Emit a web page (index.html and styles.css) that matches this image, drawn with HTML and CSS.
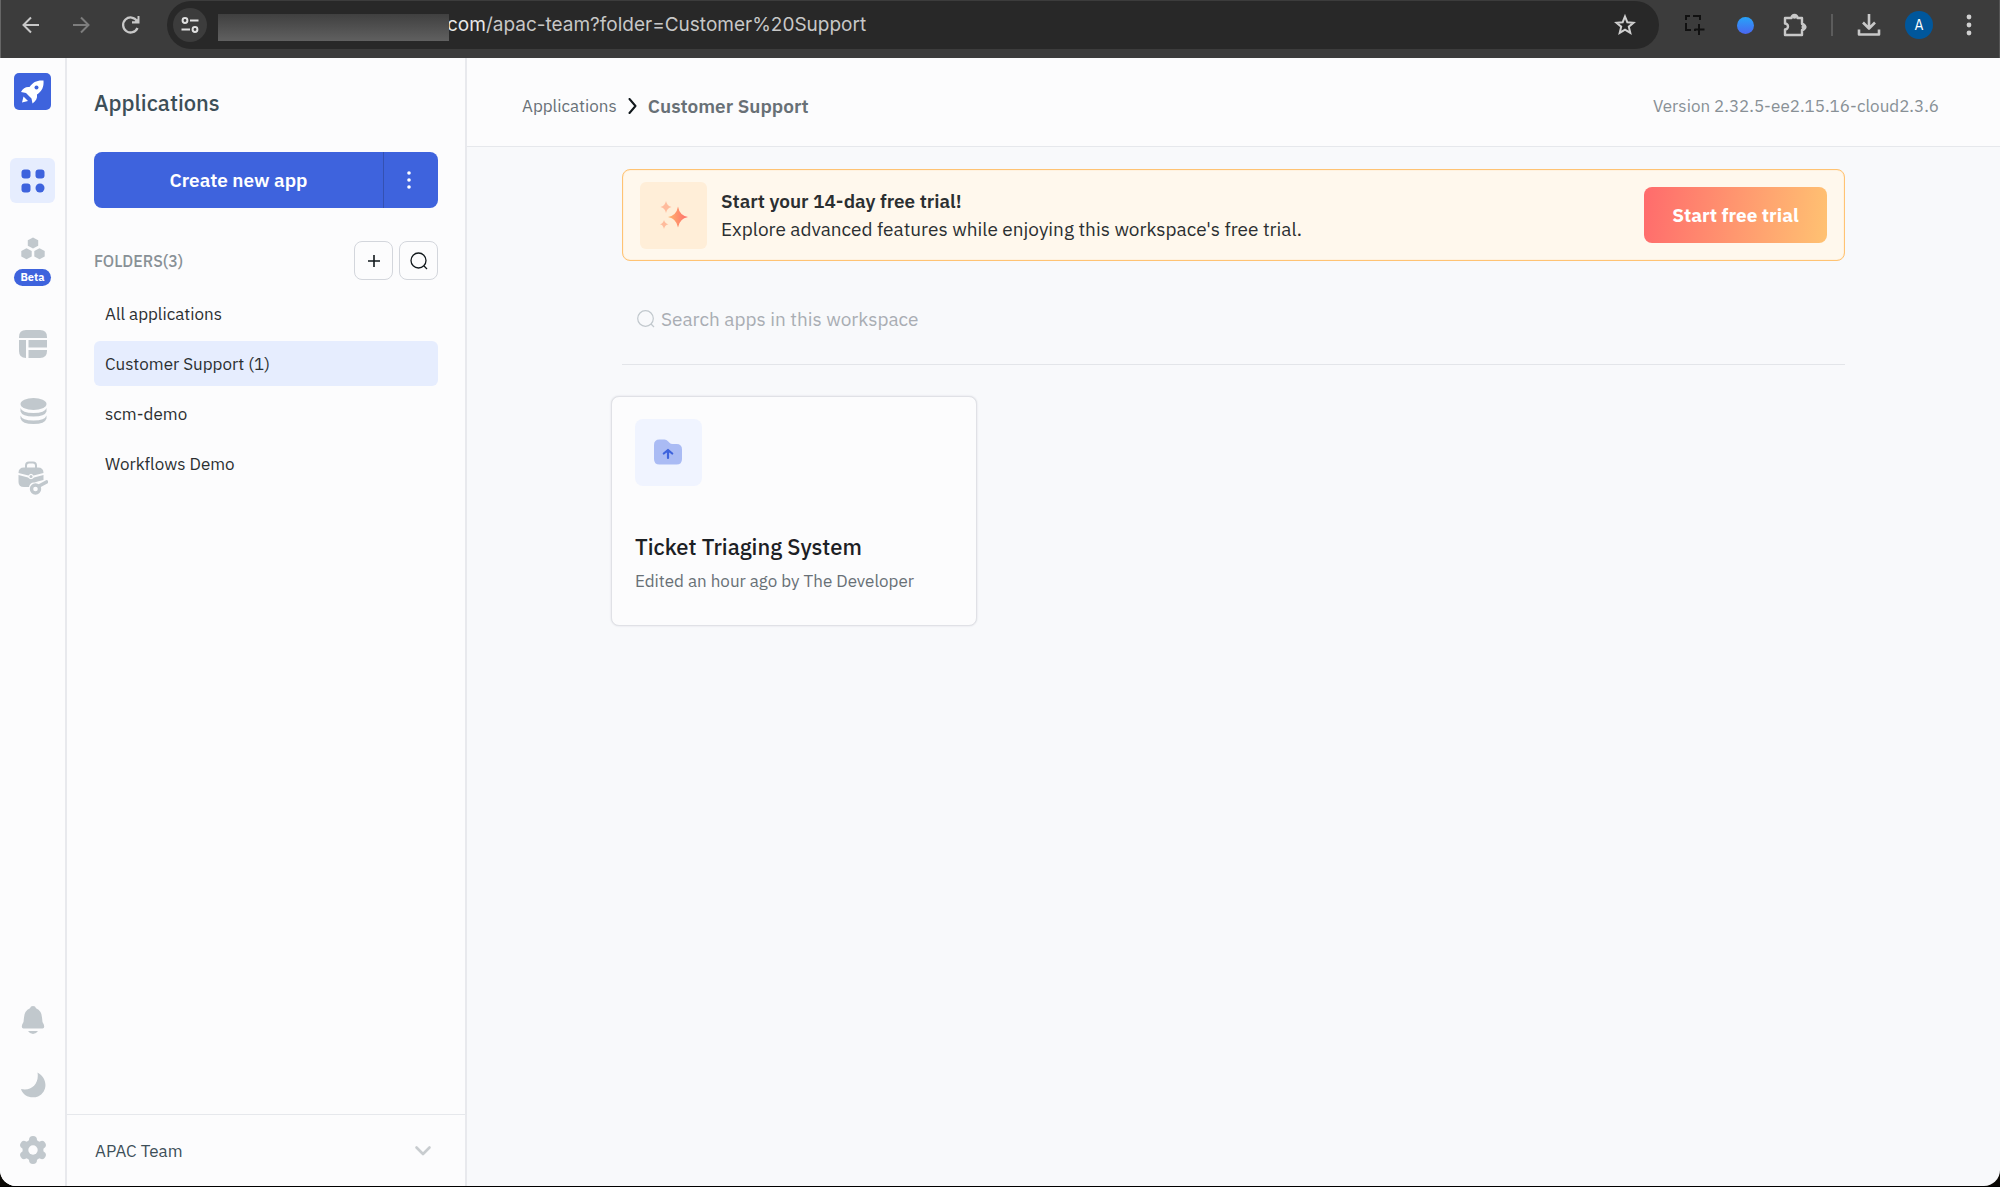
FILE: index.html
```html
<!DOCTYPE html>
<html lang="en">
<head>
<meta charset="utf-8">
<meta name="viewport" content="width=device-width, initial-scale=1">
<title>Applications</title>
<link rel="stylesheet" href="styles.css">
</head>
<body>
<div class="window">
  <div class="browser-bar">
    <button class="tool" aria-label="Back"><svg width="18" height="18" viewBox="0 0 18 18" fill="none" stroke="#c8c8c8" stroke-width="2"><path d="M17 9H2M9 1.5L1.5 9L9 16.5"/></svg></button>
    <button class="tool" aria-label="Forward"><svg width="18" height="18" viewBox="0 0 18 18" fill="none" stroke="#7d7d7d" stroke-width="2"><path d="M1 9H16M9 1.5L16.5 9L9 16.5"/></svg></button>
    <button class="tool" aria-label="Reload"><svg width="20" height="20" viewBox="0 0 20 20"><path d="M16.5 13A7.5 7.5 0 1 1 16 6" fill="none" stroke="#c8c8c8" stroke-width="2.3"/><path d="M18.5 1V8.5H11V6.3L14 6.3L16.5 4V1Z" fill="#c8c8c8"/></svg></button>
    <div class="address">
      <button class="site-info" aria-label="Site information"><svg width="18" height="18" viewBox="0 0 18 18" fill="none" stroke="#e0e0e0" stroke-width="2"><circle cx="4" cy="4.5" r="2.4"/><path d="M9 4.500H17.500M0.500 13.500H9"/><circle cx="14" cy="13.500" r="2.400"/></svg></button>
      <span class="masked"></span>
      <span class="url"><span class="host">com</span>/apac-team?folder=Customer%20Support</span>
      <button class="star" aria-label="Bookmark"><svg width="24" height="24" viewBox="0 0 24 24" fill="none" stroke="#cfcfcf" stroke-width="2"><path d="M12 3.500L14.300 9.200L20.500 9.700L15.800 13.700L17.300 19.900L12 16.600L6.700 19.900L8.200 13.700L3.500 9.700L9.700 9.200Z"/></svg></button>
    </div>
    <div class="extensions">
      <button class="tool" aria-label="Capture"><svg width="20" height="20" viewBox="0 0 20 20" fill="none" stroke="#111" stroke-width="2"><path d="M1 5V1H5M8 1H12M12 1H15V5M1 8V12M1 12V15H6M9 15H11M14 9V20M9.500 14.500H19.500"/></svg></button>
      <button class="tool" aria-label="Assistant"><span class="orb"></span></button>
      <button class="tool" aria-label="Extensions"><svg width="26" height="26" viewBox="0 0 26 26"><path d="M3 6H9.500A3 3 0 0 1 15.500 6H20V12A3 3 0 0 1 20 18V23H3V17.500A3 3 0 0 0 3 11.500Z" fill="none" stroke="#c8c8c8" stroke-width="2.400" stroke-linejoin="round"/><circle cx="12.500" cy="4.500" r="2.300" fill="#c8c8c8"/><circle cx="22" cy="15" r="2.500" fill="#c8c8c8"/></svg></button>
      <span class="bar-divider"></span>
      <button class="tool" aria-label="Downloads"><svg width="24" height="24" viewBox="0 0 24 24" fill="none" stroke="#c8c8c8" stroke-width="2.600"><path d="M12 1V15M6 9.500L12 15.500L18 9.500M2 16.500V21.500H22V16.500" stroke-linejoin="round"/></svg></button>
      <button class="profile" aria-label="Profile">A</button>
      <button class="tool" aria-label="Browser menu"><svg width="6" height="22" viewBox="0 0 6 22" fill="#d0d0d0"><circle cx="3" cy="3" r="2.400"/><circle cx="3" cy="11" r="2.400"/><circle cx="3" cy="19" r="2.400"/></svg></button>
    </div>
  </div>

  <div class="app">
    <nav class="rail" aria-label="Main">
      <a class="logo" href="#" aria-label="Home"><svg width="25" height="25" viewBox="0 0 25 25"><path d="M23.500 1.500C17 1 13 3 9.500 8C6 7.500 3 9 1 13L6 14L11.500 19.500L12.500 24.500C16 22 17.500 19.500 17 15.500C22 12 24 8 23.500 1.500Z" fill="#fff"/><path d="M3.500 17.500L8 22L2 23.500Z" fill="#fff"/><circle cx="16.500" cy="8.500" r="2" fill="#3e63dd"/></svg></a>
      <a class="rail-item active" href="#" aria-label="Applications"><svg width="24" height="24" viewBox="0 0 24 24" fill="#3e63dd"><rect x="0.500" y="0.500" width="9" height="9" rx="3"/><rect x="14.500" y="0.500" width="9" height="9" rx="3"/><rect x="0.500" y="14.500" width="9" height="9" rx="3"/><circle cx="19" cy="19" r="4.500"/></svg></a>
      <a class="rail-item workflows" href="#"><svg width="24" height="23" viewBox="0 0 24 23" fill="#c1c8cd"><path d="M12 0.500L17.200 3.300V8.700L12 11.500L6.800 8.700V3.300Z"/><path d="M5.500 11.300L10.700 14.100V19.500L5.500 22.300L0.300 19.500V14.100Z"/><path d="M18.500 11.300L23.700 14.100V19.500L18.500 22.300L13.300 19.500V14.100Z"/></svg><span class="beta">Beta</span></a>
      <a class="rail-item" href="#" aria-label="Database"><svg width="28" height="28" viewBox="0 0 28 28" fill="#c1c8cd"><path d="M0 8V7Q0 0 7 0H21Q28 0 28 7V8ZM0 10H7V28Q0 28 0 21ZM9.500 10H28V17.500H9.500ZM9.500 20H28V21Q28 28 21 28H9.500Z"/></svg></a>
      <a class="rail-item" href="#" aria-label="Data sources"><svg width="28" height="28" viewBox="0 0 28 28"><ellipse cx="14.500" cy="7" rx="13" ry="6" fill="#c1c8cd"/><path d="M1.500 11Q3 16 14.500 16T27.500 11V14.500Q26 19.500 14.500 19.500T1.500 14.500ZM1.500 18.500Q3 23.500 14.500 23.500T27.500 18.500V21.500Q26 27 14.500 27T1.500 21.500Z" fill="#c1c8cd"/></svg></a>
      <a class="rail-item" href="#" aria-label="Workspace constants"><svg width="30" height="34" viewBox="0 0 30 34"><path d="M8 7V4.500Q8 1.500 11 1.500H15Q18 1.500 18 4.500V7" fill="none" stroke="#c1c8cd" stroke-width="2"/><path d="M0.500 12Q0.500 6.500 6 6.500H20Q25.500 6.500 25.500 12L15.500 14.500Q13 11 10.500 14.500ZM0.500 14L10 16.500Q13 20 16 16.500L25.500 14V19Q20 20 16.500 21.500Q12 21 11 26H6Q0.500 26 0.500 21Z" fill="#c1c8cd"/><circle cx="13" cy="15.500" r="1.500" fill="#c1c8cd"/><circle cx="17.500" cy="28" r="4" fill="none" stroke="#c1c8cd" stroke-width="3.400"/><path d="M21 25L28.500 21" stroke="#c1c8cd" stroke-width="3.600" stroke-linecap="round"/></svg></a>
      <div class="rail-bottom">
        <a class="rail-item" href="#" aria-label="Notifications"><svg width="24" height="28" viewBox="0 0 24 28" fill="#c1c8cd"><path d="M12 0Q14.500 0 15 2.300Q20.800 5 21 11.500Q21 16 22.800 18.500Q24 22.500 21.500 22.500H2.500Q0 22.500 1.200 18.500Q3 16 3 11.500Q3.200 5 9 2.300Q9.500 0 12 0ZM7 25H17Q15 28 12 28T7 25Z"/></svg></a>
        <a class="rail-item" href="#" aria-label="Dark mode"><svg width="26" height="26" viewBox="0 0 26 26" fill="#c1c8cd"><path d="M17.500 0.500C28 6 28 20 18 24.500C11 27 3 24 1 17C11 19.500 19.500 12 17.500 0.500Z"/></svg></a>
        <a class="rail-item" href="#" aria-label="Settings"><svg width="28" height="28" viewBox="0 0 28 28"><g fill="none" stroke="#c1c8cd"><circle cx="14" cy="14" r="7.500" stroke-width="6"/><path d="M14 7V4M20.100 10.500L22.800 9M20.100 17.500L22.800 19M14 21V24M7.900 17.500L5.200 19M7.900 10.500L5.200 9" stroke-width="8" stroke-linecap="round"/></g><circle cx="14" cy="14" r="4.700" fill="#fcfcfd"/></svg></a>
      </div>
    </nav>

    <aside class="sidebar">
      <h1 class="sidebar-title">Applications</h1>
      <div class="create">
        <button class="create-main">Create new app</button>
        <button class="create-more" aria-label="More create options"><svg width="4" height="18" viewBox="0 0 4 18" fill="#fff"><circle cx="2" cy="2" r="1.800"/><circle cx="2" cy="9" r="1.800"/><circle cx="2" cy="16" r="1.800"/></svg></button>
      </div>
      <div class="folders-head">
        <h2 class="folders-title">FOLDERS(3)</h2>
        <button class="square" aria-label="Add folder"><svg width="12" height="12" viewBox="0 0 12 12" stroke="#11181c" stroke-width="1.600"><path d="M6 0V12M0 6H12"/></svg></button>
        <button class="square" aria-label="Search folders"><svg width="18" height="18" viewBox="0 0 18 18" fill="none" stroke="#11181c" stroke-width="1.300"><circle cx="8.500" cy="8.500" r="7.500"/><path d="M14 14L17 17"/></svg></button>
      </div>
      <ul class="folders">
        <li><a class="folder" href="#">All applications</a></li>
        <li><a class="folder selected" href="#">Customer Support (1)</a></li>
        <li><a class="folder" href="#">scm-demo</a></li>
        <li><a class="folder" href="#">Workflows Demo</a></li>
      </ul>
      <button class="workspace">APAC Team<svg width="18" height="12" viewBox="0 0 18 12" fill="none" stroke="#c8cccf" stroke-width="2.600" stroke-linecap="round" stroke-linejoin="round"><path d="M2.500 2.500L9 9L15.500 2.500"/></svg></button>
    </aside>

    <main class="main">
      <header class="topbar">
        <a class="crumb" href="#">Applications</a>
        <svg width="9" height="16" viewBox="0 0 9 16" fill="none" stroke="#11181c" stroke-width="2" stroke-linecap="round" stroke-linejoin="round"><path d="M1.500 1L7.500 8L1.500 15"/></svg>
        <span class="crumb-current">Customer Support</span>
        <span class="version">Version 2.32.5-ee2.15.16-cloud2.3.6</span>
      </header>
      <div class="content">
        <section class="banner">
          <div class="banner-icon"><svg width="28" height="28" viewBox="0 0 28 28"><defs><linearGradient id="spark"><stop offset="0" stop-color="#ffb66d"/><stop offset="1" stop-color="#ff6b6c"/></linearGradient></defs><path d="M18 5.500Q19.500 14.500 28 16Q19.500 17.500 18 26.500Q16.500 17.500 8 16Q16.500 14.500 18 5.500Z" fill="url(#spark)"/><path d="M6 0Q7 5 11.500 6Q7 7 6 12Q5 7 0.500 6Q5 5 6 0ZM4 19Q4.800 22.500 8.500 23.300Q4.800 24 4 28Q3.200 24 0 23.300Q3.200 22.500 4 19Z" fill="#ffbb9c"/></svg></div>
          <div class="banner-text">
            <h3 class="banner-title">Start your 14-day free trial!</h3>
            <p class="banner-copy">Explore advanced features while enjoying this workspace's free trial.</p>
          </div>
          <button class="trial">Start free trial</button>
        </section>
        <label class="search">
          <svg width="18" height="18" viewBox="0 0 18 18" fill="none" stroke="#c1c8cd" stroke-width="1.200"><circle cx="8.500" cy="8.500" r="7.800"/><path d="M14 14L17 17"/></svg>
          <input class="search-input" type="text" placeholder="Search apps in this workspace" aria-label="Search apps in this workspace">
        </label>
        <div class="cards">
          <article class="card">
            <div class="card-icon"><svg width="28" height="26" viewBox="0 0 28 26"><path d="M0 6Q0 0.500 5.500 0.500H10.500Q12.500 0.500 14 2.200L15.500 3.800Q16.500 5 18.500 5H22.500Q28 5 28 10.500V20Q28 25.500 22.500 25.500H5.500Q0 25.500 0 20Z" fill="#aabbf4"/><path d="M14 19V11.500M9.800 14.500L14 11L18.200 14.500" fill="none" stroke="#3e63dd" stroke-width="2.200" stroke-linecap="round" stroke-linejoin="round"/></svg></div>
            <h3 class="card-title">Ticket Triaging System</h3>
            <p class="card-meta">Edited an hour ago by The Developer</p>
          </article>
        </div>
      </div>
    </main>
  </div>
</div>
</body>
</html>
```

FILE: styles.css
```css
*, *::before, *::after { box-sizing: border-box; }
body { margin: 0; background: #0b0905; font-family: "IBM Plex Sans", Roboto, "Liberation Sans", sans-serif; font-size: 17px; line-height: 24px; color: #2b2f31; }
h1, h2, h3, p, ul { margin: 0; padding: 0; font-weight: 400; }
ul { list-style: none; }
a { color: inherit; text-decoration: none; }
button { margin: 0; padding: 0; border: 0; background: none; font: inherit; color: inherit; display: flex; align-items: center; justify-content: center; }
svg { display: block; flex: none; }

.window { display: flex; flex-direction: column; height: 100vh; border-bottom: 1px solid #000; }

.browser-bar { display: flex; align-items: center; flex: none; height: 58px; padding: 0 16px 8px 16px; background: #3c3c3c; border-left: 1px solid #666; border-right: 1px solid #555; }
.tool { width: 28px; height: 28px; margin-right: 22px; }
.address { display: flex; align-items: center; flex: 1; height: 48px; padding: 0 22px 0 6px; border-radius: 24px; background: #282828; }
.site-info { width: 34px; height: 34px; margin-right: 11px; border-radius: 50%; background: #3c3c3c; }
.masked { z-index: 1; width: 231px; height: 27px; margin: 4px -2px 0 0; background: linear-gradient(#404040, #606060); }
.url { font-family: Inter, "Liberation Sans", sans-serif; font-size: 19px; color: #c7c7c7; }
.host { color: #e8e8e8; }
.star { margin-left: auto; }
.extensions { display: flex; align-items: center; padding-left: 22px; }
.orb { width: 17px; height: 17px; border-radius: 50%; background: linear-gradient(#27a3f8, #4a66f0); }
.bar-divider { width: 2px; height: 22px; margin-right: 22px; background: #5c5c5c; }
.profile { width: 28px; height: 28px; margin-right: 22px; border-radius: 50%; background: #00579c; color: #fff; font-size: 14px; }
.extensions .tool:last-child { margin-right: 0; }

.app { display: flex; flex: 1; min-height: 0; background: #f8f9fb; border-radius: 0 0 16px 16px; overflow: hidden; }

.rail { display: flex; flex-direction: column; align-items: center; width: 67px; flex: none; padding: 15px 0 14px; background: #fcfcfd; border-right: 2px solid #e8e9ed; }
.logo { display: flex; align-items: center; justify-content: center; width: 37px; height: 37px; margin-bottom: 48px; border-radius: 5px; background: #3e63dd; }
.rail-item { display: flex; flex-direction: column; align-items: center; justify-content: center; width: 45px; height: 45px; margin-bottom: 22px; border-radius: 6px; }
.active { background: #e6edfe; }
.workflows { justify-content: flex-start; gap: 9px; height: 74px; padding-top: 12px; }
.beta { width: 37px; border-radius: 9px; background: #3e63dd; color: #fff; font-size: 11px; font-weight: 700; line-height: 17px; text-align: center; }
.rail-bottom { display: grid; gap: 20px; margin-top: auto; }
.rail-bottom .rail-item { margin: 0; }

.sidebar { display: flex; flex-direction: column; width: 400px; flex: none; background: #fcfcfd; border-right: 2px solid #e8e9ed; }
.sidebar-title { padding: 30px 27px 35px; font-size: 22px; font-weight: 500; line-height: 29px; color: #3d4f58; }
.create { display: flex; height: 56px; margin: 0 27px; border-radius: 8px; background: #3e63dd; color: #fff; }
.create-main { flex: 1; font-size: 19px; font-weight: 600; }
.create-more { width: 55px; padding-right: 4px; border-left: 1px solid #3451b2; }
.folders-head { display: flex; align-items: center; gap: 6px; padding: 33px 27px 11px; }
.folders-title { flex: 1; font-size: 16px; font-weight: 500; color: #889096; }
.square { width: 39px; height: 39px; border: 1px solid #d3d6dc; border-radius: 8px; }
.folders { display: grid; gap: 5px; margin: 0 27px; }
.folder { display: flex; align-items: center; height: 45px; padding: 0 11px; border-radius: 6px; }
.selected { background: #e6edfe; }
.workspace { justify-content: space-between; height: 72px; margin-top: auto; padding: 0 33px 0 28px; border-top: 1px solid #e6e8ec; color: #3d4f58; }

.main { flex: 1; min-width: 0; }
.topbar { display: flex; align-items: center; gap: 11px; height: 89px; padding: 7px 61px 0 55px; background: #fcfcfd; border-bottom: 1px solid #e6e8ec; color: #687076; }
.crumb-current { font-size: 19px; font-weight: 600; }
.version { margin-left: auto; color: #889096; }
.content { padding: 22px 155px; }
.banner { display: flex; align-items: center; gap: 14px; height: 92px; padding: 0 17px; border: 1px solid #ffc373; border-radius: 8px; background: #fff8ed; box-shadow: inset 0 0 1px #ffc373; }
.banner-icon { display: flex; align-items: center; justify-content: center; width: 67px; height: 67px; border-radius: 6px; background: #ffeed8; }
.banner-text { flex: 1; font-size: 19px; line-height: 28px; }
.banner-title { font-size: 19px; font-weight: 600; }
.trial { width: 183px; height: 56px; border-radius: 8px; background: linear-gradient(97deg, #ff6b6c, #ffc272); color: #fff; font-size: 19px; font-weight: 700; }
.search { display: flex; align-items: center; gap: 6px; height: 104px; padding: 13px 15px 0; border-bottom: 1px solid #e3e5e9; }
.search-input { flex: 1; min-width: 0; padding: 0; border: 0; outline: 0; background: none; font: inherit; font-size: 19px; line-height: 28px; }
.search-input::placeholder { color: #a9adb3; opacity: 1; }
.cards { display: grid; grid-template-columns: repeat(auto-fill, 366px); gap: 24px; margin: 31px -11px 0; }
.card { height: 230px; padding: 22px 23px; border: 1px solid #e0e1e6; border-radius: 8px; background: #fcfcfd; box-shadow: 0 0 2px #d8dae0; }
.card-icon { display: flex; align-items: center; justify-content: center; width: 67px; height: 67px; margin-bottom: 46px; padding: 0 2px 2px 0; border-radius: 8px; background: #f0f4ff; }
.card-title { font-size: 22px; font-weight: 500; line-height: 29px; color: #1c2024; }
.card-meta { margin-top: 8px; color: #687076; }
```
